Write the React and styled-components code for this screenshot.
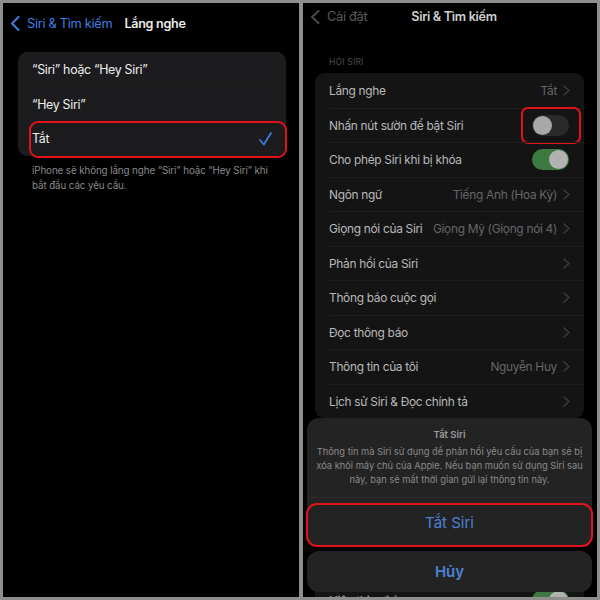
import React from 'react';
import styled, { createGlobalStyle } from 'styled-components';

const GlobalStyle = createGlobalStyle`
	html, body {
		margin: 0;
		padding: 0;
		background: #8e8e8e;
	}
	* {
		box-sizing: border-box;
	}
	body {
		font-family: Inter, "Noto Sans", sans-serif;
		-webkit-font-smoothing: antialiased;
	}
`;

const Frame = styled.div`
	display: flex;
	gap: 4px;
	width: 600px;
	height: 600px;
	padding: 3px;
	background: #8e8e8e;
`;

const Screen = styled.div`
	position: relative;
	flex: 0 0 ${(p) => p.$w}px;
	height: 594px;
	overflow: hidden;
	background: #000;
	letter-spacing: -0.3px;
`;

const Nav = styled.div`
	display: grid;
	grid-template-columns: 1fr auto 1fr;
	align-items: center;
	height: ${(p) => p.$h}px;
	padding-left: 8px;
`;

const Back = styled.div`
	display: flex;
	align-items: center;
	gap: 7px;
	font-size: 12.8px;
	color: ${(p) => p.$color};
`;

const NavTitle = styled.div`
	font-size: 12.6px;
	font-weight: 600;
	color: ${(p) => p.$color};
`;

const Card = styled.div`
	margin: ${(p) => p.$margin};
	border-radius: 9px;
	background: ${(p) => p.$bg};
`;

const Row = styled.div`
	position: relative;
	display: flex;
	align-items: center;
	gap: 6px;
	height: ${(p) => p.$h}px;
	padding: 0 14px;
	font-size: ${(p) => p.$size}px;
	color: ${(p) => p.$color};

	& + & {
		border-top: 1px solid ${(p) => p.$line};
		margin-left: 14px;
		padding-left: 0;
	}
`;

const Label = styled.span`
	flex: 1;
	white-space: nowrap;
`;

const Value = styled.span`
	white-space: nowrap;
	color: #666668;
`;

const Highlight = styled.div`
	position: absolute;
	inset: ${(p) => p.$inset};
	border: 2px solid #e3121b;
	border-radius: ${(p) => p.$r}px;
	pointer-events: none;
`;

const Note = styled.p`
	margin: ${(p) => p.$margin};
	font-size: ${(p) => p.$size}px;
	line-height: ${(p) => p.$lh}px;
	color: ${(p) => p.$color};
	letter-spacing: -0.1px;
	white-space: nowrap;
`;

const SectionHead = styled.div`
	margin: ${(p) => p.$margin};
	font-size: 8.5px;
	line-height: 10px;
	letter-spacing: 0.2px;
	color: #4c4c4c;
`;

const Toggle = styled.div`
	position: relative;
	width: 37px;
	height: 21px;
	border-radius: 11px;
	background: ${(p) => (p.$on ? '#3c7a41' : '#2a2a2d')};

	&::after {
		content: '';
		position: absolute;
		top: 1px;
		left: ${(p) => (p.$on ? '17px' : '1px')};
		width: 19px;
		height: 19px;
		border-radius: 50%;
		background: ${(p) => (p.$on ? '#b2b2b2' : '#a8a8a8')};
	}
`;

const ToggleBox = styled.div`
	position: relative;
	margin-right: 1px;
`;

const Sheet = styled.div`
	position: absolute;
	left: 4px;
	right: 5px;
	bottom: 5px;
	display: flex;
	flex-direction: column;
	gap: 5px;
	letter-spacing: 0;
`;

const SheetGroup = styled.div`
	position: relative;
	border-radius: 12px;
	background: #232323;
`;

const SheetMessage = styled.div`
	padding: 10px 8px 10px;
	text-align: center;
	border-bottom: 1px solid #2c2c2c;
`;

const SheetTitle = styled.div`
	font-size: 9.5px;
	font-weight: 600;
	color: #9c9c9c;
	line-height: 13px;
	margin-bottom: 4px;
`;

const SheetLine = styled.div`
	font-size: 9.3px;
	line-height: 14px;
	color: #8a8a8a;
	white-space: nowrap;
`;

const SheetButton = styled.div`
	position: relative;
	display: flex;
	align-items: center;
	justify-content: center;
	height: ${(p) => p.$h}px;
	font-size: 15px;
	font-weight: ${(p) => (p.$bold ? 600 : 400)};
	color: #4b82d6;
`;

const Chevron = ({ color = '#3c3c3e', w = 5, h = 9, sw = 1.5 }) => (
	<svg width={w + 2} height={h + 2} viewBox={`-1 -1 ${w + 2} ${h + 2}`}>
		<polyline
			points={`0,0 ${w},${h / 2} 0,${h}`}
			fill="none"
			stroke={color}
			strokeWidth={sw}
			strokeLinecap="round"
			strokeLinejoin="round"
		/>
	</svg>
);

const BackArrow = ({ color, h = 13 }) => (
	<svg width="9" height={h + 2} viewBox={`-1 -1 9 ${h + 2}`}>
		<polyline
			points={`6.5,0 0,${h / 2} 6.5,${h}`}
			fill="none"
			stroke={color}
			strokeWidth="2"
			strokeLinecap="round"
			strokeLinejoin="round"
		/>
	</svg>
);

const Check = () => (
	<svg width="13" height="14" viewBox="0 0 13 14">
		<polyline
			points="1,8 4.8,12.5 12,1"
			fill="none"
			stroke="#3b7bd8"
			strokeWidth="1.8"
			strokeLinecap="round"
			strokeLinejoin="round"
		/>
	</svg>
);

const listenOptions = ['“Siri” hoặc “Hey Siri”', '“Hey Siri”', 'Tắt'];

const siriRows = [
	{ label: 'Lắng nghe', value: 'Tắt', chevron: true },
	{ label: 'Nhấn nút sườn để bật Siri', toggle: false, mark: true },
	{ label: 'Cho phép Siri khi bị khóa', toggle: true },
	{ label: 'Ngôn ngữ', value: 'Tiếng Anh (Hoa Kỳ)', chevron: true },
	{ label: 'Giọng nói của Siri', value: 'Giọng Mỹ (Giọng nói 4)', chevron: true },
	{ label: 'Phản hồi của Siri', chevron: true },
	{ label: 'Thông báo cuộc gọi', chevron: true },
	{ label: 'Đọc thông báo', chevron: true },
	{ label: 'Thông tin của tôi', value: 'Nguyễn Huy', chevron: true },
	{ label: 'Lịch sử Siri & Đọc chính tả', chevron: true },
];

const sheetLines = [
	'Thông tin mà Siri sử dụng để phản hồi yêu cầu của bạn sẽ bị',
	'xóa khỏi máy chủ của Apple. Nếu bạn muốn sử dụng Siri sau',
	'này, bạn sẽ mất thời gian gửi lại thông tin này.',
];

const ListenScreen = () => (
	<Screen $w={296}>
		<Nav $h={40}>
			<Back $color="#3f7fe0">
				<BackArrow color="#3f7fe0" />
				Siri &amp; Tìm kiếm
			</Back>
			<NavTitle $color="#ececec">Lắng nghe</NavTitle>
			<span />
		</Nav>
		<Card $bg="#1c1c1e" $margin="9px 13px 0 15px">
			{listenOptions.map((opt, idx) => (
				<Row key={opt} $h={34.5} $size={12.4} $color="#eeeeee" $line="#2e2e30">
					<Label>{opt}</Label>
					{idx === 2 && (
						<>
							<Check />
							<Highlight $inset="-1px -1px -2px -3px" $r={9} />
						</>
					)}
				</Row>
			))}
		</Card>
		<Note $margin="7px 0 0 29px" $size={9.8} $lh={15} $color="#8a8a8c">
			iPhone sẽ không lắng nghe “Siri” hoặc “Hey Siri” khi
			<br />
			bắt đầu các yêu cầu.
		</Note>
	</Screen>
);

const SettingsRow = ({ row }) => (
	<Row $h={34.5} $size={11.9} $color="#b9b9b9" $line="#1e1e1f">
		<Label>{row.label}</Label>
		{row.value && <Value>{row.value}</Value>}
		{row.chevron && <Chevron />}
		{row.toggle !== undefined && (
			<ToggleBox>
				<Toggle $on={row.toggle} />
				{row.mark && <Highlight $inset="-8px -12px -8px -11px" $r={7} />}
			</ToggleBox>
		)}
	</Row>
);

const SiriScreen = () => (
	<Screen $w={294}>
		<Nav $h={27}>
			<Back $color="#5c5c5e">
				<BackArrow color="#4a4a4c" h={12} />
				Cài đặt
			</Back>
			<NavTitle $color="#cfcfcf">Siri &amp; Tìm kiếm</NavTitle>
			<span />
		</Nav>
		<SectionHead $margin="27px 0 6px 26px">HỎI SIRI</SectionHead>
		<Card $bg="#141415" $margin="0 13px 0 12px">
			{siriRows.map((row) => (
				<SettingsRow key={row.label} row={row} />
			))}
		</Card>
		{/* next group sits behind the sheet; only its row's top edge peeks out */}
		<Card $bg="#141415" $margin="165px 13px 0 12px">
			<SettingsRow row={{ label: 'Hiện thị gợi ý', toggle: true }} />
		</Card>
		<Sheet>
			<SheetGroup>
				<SheetMessage>
					<SheetTitle>Tắt Siri</SheetTitle>
					{sheetLines.map((line) => (
						<SheetLine key={line}>{line}</SheetLine>
					))}
				</SheetMessage>
				<SheetButton $h={48}>
					Tắt Siri
					<Highlight $inset="5px -1px -1px -1px" $r={11} />
				</SheetButton>
			</SheetGroup>
			<SheetGroup>
				<SheetButton $h={41} $bold>
					Hủy
				</SheetButton>
			</SheetGroup>
		</Sheet>
	</Screen>
);

const App = () => (
	<>
		<GlobalStyle />
		<Frame>
			<ListenScreen />
			<SiriScreen />
		</Frame>
	</>
);

export default App;
